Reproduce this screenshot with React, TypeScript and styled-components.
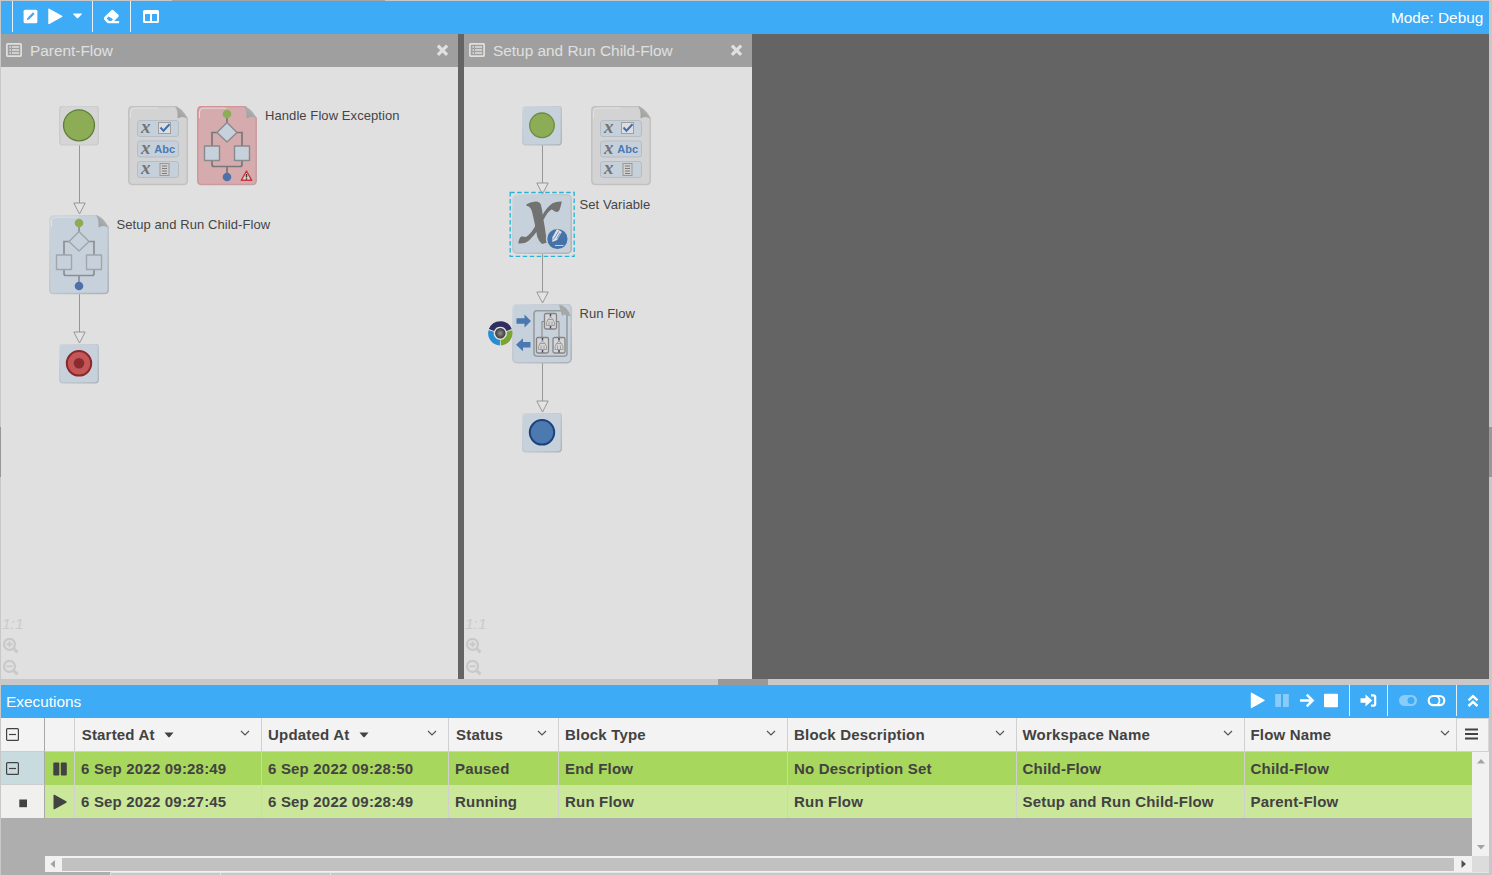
import React from 'react';
import styled, { createGlobalStyle } from 'styled-components';

const Global = createGlobalStyle`
  * { box-sizing: border-box; }
  body { margin: 0; background: #c8c8c8; font-family: 'Liberation Sans', Arial, sans-serif; color: #424242; overflow: hidden; }
  svg { display: block; flex: none; }
`;

const Page = styled.div`
  width: 1492px;
  height: 875px;
  padding: 0 3px 0 1px;
  background: #c8c8c8;
  display: flex;
  flex-direction: column;
  position: relative;
`;
const TopEdge = styled.div`
  height: 1px;
  margin-left: 171px;
  width: 213px;
  background: #a5a5a5;
`;
const EdgeGrip = styled.div<{ $side: 'left' | 'right' }>`
  position: absolute;
  top: 427px;
  height: 50px;
  width: ${p => (p.$side === 'left' ? 1 : 3)}px;
  ${p => p.$side}: 0;
  background: #989898;
`;
const Bar = styled.div`
  height: 33px;
  flex: none;
  background: #3dabf5;
  color: #fff;
  display: flex;
  align-items: center;
  font-size: 15.4px;
`;
const BarTitle = styled.span<{ $left?: number; $right?: number }>`
  margin-left: ${p => p.$left ?? 0}px;
  margin-right: ${p => p.$right ?? 0}px;
`;
const Spacer = styled.div`
  flex: 1;
`;
const Group = styled.div<{ $width: number; $first?: boolean }>`
  width: ${p => p.$width}px;
  height: 31px;
  margin-bottom: 2px;
  border-left: ${p => (p.$first ? 0 : 1)}px solid #e4f1fb;
`;

const Workspace = styled.div`
  height: 645px;
  flex: none;
  display: flex;
  gap: 6px;
  background: #646464;
`;
const Panel = styled.section<{ $width: number }>`
  width: ${p => p.$width}px;
  background: #e0e0e0;
  display: flex;
  flex-direction: column;
`;
const PanelHead = styled.header`
  height: 33px;
  background: #9f9f9f;
  color: #e0e0e0;
  display: flex;
  align-items: center;
  padding: 0 9px 1px 5px;
  font-size: 15.4px;
`;
const PanelTitle = styled.span`
  flex: 1;
  padding: 2px 0 0 8px;
`;
const Canvas = styled.div`
  flex: 1;
  position: relative;
`;
const Node = styled.div<{ $x: number; $y: number }>`
  position: absolute;
  left: ${p => p.$x}px;
  top: ${p => p.$y}px;
`;
const Label = styled(Node)`
  font-size: 13px;
  line-height: 16px;
  letter-spacing: 0.08px;
  white-space: nowrap;
  color: #454545;
`;
const ZoomTools = styled.div`
  position: absolute;
  left: 1px;
  bottom: 3px;
  display: flex;
  flex-direction: column;
  gap: 6px;
  color: #cbcbcb;
  font: italic 15.5px/16px 'Liberation Sans', sans-serif;
`;

const Splitter = styled.div`
  height: 6px;
  flex: none;
  padding-left: 717px;
`;
const Grip = styled.div`
  width: 50px;
  height: 6px;
  background: #989898;
`;

const Grid = styled.div`
  height: 154px;
  flex: none;
  background: #aeaeae;
  display: flex;
`;
const TreeColumn = styled.div`
  width: 44px;
  flex: none;
`;
const TreeCell = styled.div<{ $bg: string; $h: number; $line?: boolean; $pad: number }>`
  height: ${p => p.$h}px;
  background: ${p => p.$bg};
  border-right: 1px solid #a8a8a8;
  border-bottom: ${p => (p.$line ? 1 : 0)}px solid #cdcdcd;
  padding-left: ${p => p.$pad}px;
  display: flex;
  align-items: center;
`;
const DataArea = styled.div`
  flex: 1;
  display: flex;
  flex-direction: column;
`;
const HeaderRow = styled.div`
  display: flex;
  height: 34px;
  background: #f3f3f3;
  border-bottom: 1px solid #cfcfcf;
`;
const Cell = styled.div<{ $width: number; $pad?: number; $last?: boolean }>`
  width: ${p => p.$width}px;
  border-right: ${p => (p.$last ? 0 : 1)}px solid #d0d0d0;
  padding-left: ${p => p.$pad ?? 7}px;
  display: flex;
  align-items: center;
  font-size: 15px;
  font-weight: bold;
  letter-spacing: 0.19px;
  white-space: nowrap;
`;
const HeadCell = styled(Cell)<{ $end: number }>`
  justify-content: space-between;
  padding-right: ${p => p.$end}px;
`;
const HeadText = styled.span`
  display: flex;
  align-items: center;
  gap: 9.5px;
`;
const Raised = styled.span`
  margin-bottom: 3px;
`;
const MenuCell = styled.div`
  width: 32px;
  border: 1px solid #d8d8d8;
  border-bottom: 0;
  border-left: 0;
  padding: 0 0 2px 8px;
  display: flex;
  align-items: center;
`;
const Body = styled.div`
  display: flex;
  height: 104px;
`;
const Rows = styled.div`
  width: 1427px;
`;
const Row = styled.div<{ $bg: string }>`
  height: 33px;
  background: ${p => p.$bg};
  display: flex;
`;
const VScroll = styled.div`
  width: 17px;
  background: #f1f1f1;
  display: flex;
  flex-direction: column;
  justify-content: space-between;
  align-items: center;
  padding: 6px 0 5px;
`;
const HScroll = styled.div`
  height: 16px;
  width: 1427px;
  background: #f1f1f1;
  display: flex;
  align-items: center;
  justify-content: space-between;
  padding: 0 4px 0 5px;
`;
const Thumb = styled.div`
  width: 1392px;
  height: 13px;
  margin-top: 1px;
  margin-left: -3px;
  background: #c1c1c1;
`;
const ScrollLine = styled.div`
  display: flex;
  background: #dcdcdc;
`;
const BottomStrip = styled.div`
  height: 3px;
  display: flex;
  background: #c8c8c8;
  border-top: 1px solid #e6e6e6;
`;
const StripTab = styled.div<{ $bg: string }>`
  width: 110px;
  height: 3px;
  margin-top: -1px;
  background: ${p => p.$bg};
  border-right: 1px solid #e6e6e6;
  border-top: 1px solid ${p => (p.$bg === '#c8c8c8' ? '#e6e6e6' : p.$bg)};
`;

/* Toolbar drawings; every group is 31px tall and drawn in its own pixel space. */
const EditTools = () => (
  <svg width="79" height="31" fill="#fff">
    <rect x="10.6" y="8.7" width="13.800" height="13.600" rx="1.600" />
    <path d="M13.800 19.200l.6-2.300 5.600-5.600 1.600 1.700-5.600 5.600z" fill="#3dabf5" />
    <path d="M35.300 8.300q0-1.200 1.100-.6l12.600 7q1 .7 0 1.400l-12.600 7q-1.100.5-1.100-.6z" />
    <path d="M60.500 12.500h8q.9 0 .3.800l-3.600 3.600q-.7.600-1.400 0l-3.600-3.600q-.6-.8.3-.8z" />
  </svg>
);
const EraserIcon = () => (
  <svg width="37" height="31">
    <path fill="#fff" fillRule="evenodd" d="M11.400 16l7-6.800q1-.8 2 0l5 4.600q.8 1 0 2l-4.200 4.200h4.900v2.300H15.300q-.8 0-1.500-.7l-2.400-2.800q-.9-1.200 0-2.800zM15.600 15.600l-2 1.900 2.500 2.500h2.200l1.800-1.800z" />
  </svg>
);
const ColumnsIcon = () => (
  <svg width="40" height="31">
    <path fill="#fff" fillRule="evenodd" d="M13.500 9h13q1.500 0 1.500 1.500v10q0 1.500-1.500 1.500h-13q-1.500 0-1.500-1.500v-10Q12 9 13.500 9zM14 13v7h5v-7zM21 13v7h5v-7z" />
  </svg>
);

const ListIcon = () => (
  <svg width="16" height="14" fill="none" stroke="#e0e0e0">
    <rect x=".9" y=".8" width="14.200" height="12.400" rx="1" strokeWidth="1.700" />
    <path d="M3.500 4h1.500M6 4h7M3.500 7h1.500M6 7h7M3.500 10h1.500M6 10h7" strokeWidth="1.400" />
  </svg>
);
const CloseIcon = () => (
  <svg width="13" height="12" viewBox="0 0 13 12">
    <path d="M1.900 1.600l9.200 9.200M11.100 1.600l-9.200 9.200" stroke="#e0e0e0" strokeWidth="3.200" />
  </svg>
);
const Magnifier = ({ plus }: { plus?: boolean }) => (
  <svg width="17" height="16" fill="none" stroke="#c9c9c9">
    <circle cx="7.500" cy="6.300" r="5.500" strokeWidth="2.200" />
    <path d="M11.300 10.200l4.200 4.200" strokeWidth="3" />
    <path d={plus ? 'M4.500 6.300h6M7.500 3.300v6' : 'M4.500 6.300h6'} strokeWidth="1.900" />
  </svg>
);
const Zooms = () => (
  <ZoomTools>
    <span>1:1</span>
    <Magnifier plus />
    <Magnifier />
  </ZoomTools>
);

const HiddenDefs = styled.svg`
  position: absolute;
`;
const Defs = () => (
  <HiddenDefs width="0" height="0">
    <defs>
      <linearGradient id="fold" x1="0" y1="1" x2="1" y2="0">
        <stop offset="0" stopColor="#989898" />
        <stop offset="1" stopColor="#bdbdbd" />
      </linearGradient>
      <linearGradient id="rim" x1="0" y1="0" x2="1" y2="1">
        <stop offset="0" stopColor="#d3d8dc" />
        <stop offset=".5" stopColor="#bfc6cc" />
        <stop offset="1" stopColor="#aab1b8" />
      </linearGradient>
      <linearGradient id="rimRed" x1="0" y1="0" x2="1" y2="1">
        <stop offset="0" stopColor="#d98f92" />
        <stop offset="1" stopColor="#c2a0a2" />
      </linearGradient>
      <radialGradient id="ball">
        <stop offset="0" stopColor="#929292" />
        <stop offset="1" stopColor="#383838" />
      </radialGradient>
    </defs>
  </HiddenDefs>
);

const Tile = ({ kind }: { kind: 'begin' | 'start' | 'end' | 'stop' }) => (
  <svg width="40" height="40">
    <rect x=".7" y=".2" width="38.600" height="38.600" rx="3" fill={kind === 'begin' ? '#d5d5d5' : '#c7d1db'} stroke={kind === 'begin' ? '#cbcbcb' : 'url(#rim)'} strokeWidth="1.300" />
    {kind === 'begin' && <circle cx="20" cy="19.300" r="15.500" fill="#8cad55" stroke="#607d3b" strokeWidth="1.300" />}
    {kind === 'start' && <circle cx="20" cy="19.300" r="12.300" fill="#8cad55" stroke="#6b8d42" strokeWidth="1.300" />}
    {kind === 'end' && <circle cx="20" cy="19.300" r="12.200" fill="#4b79b0" stroke="#1c427e" strokeWidth="2" />}
    {kind === 'stop' && (
      <>
        <circle cx="20" cy="19.300" r="12.200" fill="#c45558" stroke="#8a2829" strokeWidth="2" />
        <circle cx="20" cy="19.300" r="5.300" fill="#892c2d" />
      </>
    )}
  </svg>
);

const Sheet = ({ fill, rim }: { fill: string; rim: string }) => (
  <>
    <path d="M4 .4H48L59.200 12.200V74.500Q59.200 78.600 55 78.600H5Q.8 78.600.8 74.500V5Q.8.4 5 .4z" fill={fill} stroke={rim} strokeWidth="1.500" />
    <path d="M2.500 12V6q0-3.800 4-3.800h23" stroke="#e5e5e5" strokeOpacity=".8" fill="none" />
    <path d="M47 .2Q55 2.200 59.500 12.500Q53.500 9.500 49.500 12.500Q50.300 5 47 .2z" fill="url(#fold)" />
  </>
);

const FlowSheet = ({ error }: { error?: boolean }) => (
  <svg width="60" height="80">
    <Sheet fill={error ? '#d6abad' : '#c7d1db'} rim={error ? 'url(#rimRed)' : 'url(#rim)'} />
    <path d="M30 9v8M21 26.500h-6v14M39 26.500h6v14M15 54v4.500q0 2 2 2h26q2 0 2-2v-4.500M30 60.500v8" fill="none" stroke={error ? '#777' : '#8c9094'} strokeWidth="1.700" />
    <path d="M30 16.500l10 10-10 9.500L20 26.500zM7.500 40h15v14.500h-15zM37.500 40h15v14.500h-15z" fill="#c7d1db" stroke={error ? '#878b8e' : '#a0a6ab'} strokeWidth="1.400" strokeLinejoin="round" />
    <circle cx="30" cy="8" r="4.300" fill="#8cad55" />
    <circle cx="30" cy="71" r="4.300" fill="#4e70ab" />
    {error && (
      <>
        <path d="M49.500 65l5.200 9.300H44.300z" fill="#ded5d5" stroke="#c93739" strokeWidth="1.400" strokeLinejoin="round" />
        <path d="M49.500 68v3.500M49.500 72.200v1.300" stroke="#333" strokeWidth="1.400" />
      </>
    )}
  </svg>
);

const XText = styled.text`
  font: italic bold 19px 'Liberation Serif', serif;
  fill: #747474;
`;
const AbcText = styled.text`
  font: bold 11px 'Liberation Sans', sans-serif;
  fill: #4b79b5;
`;
const VariablesSheet = () => (
  <svg width="60" height="80">
    <Sheet fill="#d3d3d3" rim="#c1c1c1" />
    {[14.500, 35, 55.500].map(y => (
      <g key={y}>
        <rect x="9.500" y={y} width="41" height="16" rx="2.500" fill="#c6d0db" stroke="#b5bdc5" />
        <XText x="13" y={y + 12.800}>x</XText>
      </g>
    ))}
    <rect x="30.500" y="16.500" width="12" height="11" fill="#dedede" stroke="#9f9f9f" />
    <path d="M32.500 21.500l3 3.300 6-6.500" fill="none" stroke="#416fad" strokeWidth="2" />
    <AbcText x="26.300" y="47.200">Abc</AbcText>
    <rect x="32" y="57.500" width="9" height="12" fill="#cfcfcf" stroke="#999" />
    <path d="M34 60h5M34 62.500h5M34 65h5M34 67.500h5" stroke="#7d7d7d" />
  </svg>
);

const SetVariableTile = () => (
  <svg width="66" height="66">
    <rect x="3.800" y="3.800" width="58.400" height="58.400" rx="4" fill="#c7d1db" stroke="url(#rim)" strokeWidth="1.500" />
    <g fill="#727272">
      <path d="M17.500 13.200Q22 10.600 27 10.500Q31 10.600 32 14Q33.300 19 33.800 25L36 37.500Q36.800 46 38.500 51.500L33 53Q30 50.500 28.300 46L26 34L23 20.500Q21.500 15.500 17.500 14.800z" />
      <path d="M33 24.500Q38.500 15.500 43.500 12.300Q47.500 10.200 52.800 10.500Q52 15 50.500 19Q48.500 22.300 45.500 20.300Q43.500 18.500 42.500 18.500Q38.500 20.500 34.500 29z" />
      <path d="M27.200 33Q23 42 17 46Q14.500 45.200 12.500 45.600Q10 46.500 9.300 52.500Q16.500 53 20.500 49Q25 44.500 29 39z" />
    </g>
    <circle cx="48.400" cy="48" r="10.800" fill="#4672aa" stroke="#c8cfd5" strokeWidth="1.400" />
    <path d="M43.300 51l.1-4.800 4-7.300q.6-.9 1.500-.5l3.200 2q.8.5.3 1.400l-4.300 7.200z" fill="#dde2e7" />
    <path d="M46.100 46.300l3.500-6M48 47.500l3.200-5.500M44.300 48.600l1.800-2.300" stroke="#4672aa" strokeWidth=".7" />
    <path d="M46 54.500h8.500" stroke="#ccd3da" />
    <rect x="1.200" y="1.500" width="64" height="64" fill="none" stroke="#29b2d6" strokeWidth="1.300" strokeDasharray="4.500 2.500" />
  </svg>
);

const MiniFlow = ({ x, y }: { x: number; y: number }) => (
  <g transform={`translate(${x} ${y})`} fill="none">
    <rect x=".5" y=".5" width="12" height="15.500" rx="1.500" fill="#d6d6d6" stroke="#858585" strokeWidth="1.300" />
    <path d="M6.500 4L9 6.500H4zM4 6.500L2.500 9.500v3h8v-3L9 6.500M5 8.500v3.500M8 8.500v3.500" strokeWidth=".9" stroke="#999" />
    <path d="M6.500 1v2.500M6.500 13v2.500" stroke="#44406a" strokeWidth="1.400" />
  </g>
);
const RunFlowTile = () => (
  <svg width="60" height="60">
    <rect x=".8" y=".3" width="58.400" height="58.400" rx="4" fill="#c7d1db" stroke="url(#rim)" strokeWidth="1.500" />
    <rect x="22" y="6.700" width="33" height="45.500" rx="3" fill="none" stroke="#979c9f" strokeWidth="1.600" />
    <path d="M47 .5Q55 1.500 59 12.500Q52 9.500 50 12L47 .5z" fill="#a5a7a9" />
    <path d="M32 17.500h-2v16M45 17.500h2v16" fill="none" stroke="#858585" />
    <MiniFlow x={32} y={9} />
    <MiniFlow x={24} y={33} />
    <MiniFlow x={40.500} y={33} />
    <path d="M4.500 14.300h8v-3.800l6.500 6.500-6.500 6.500v-3.800h-8zM18.500 38h-7.500v-3.800l-7 6.500 7 6.500v-3.800h7.500z" fill="#4a78b0" />
  </svg>
);
const BusyRing = () => (
  <svg width="26" height="26" viewBox="-13.300 -13.300 26 26" fill="none" strokeWidth="5.500">
    <path d="M-8.800-3.300A9.400 9.400 0 0 1 8.800-3.300" stroke="#302d61" />
    <path d="M9.100-2.300A9.400 9.400 0 0 1 .4 9.400" stroke="#7ba533" />
    <path d="M-.4 9.400A9.400 9.400 0 0 1-9.100-2.300" stroke="#268dd3" />
    <circle r="5.200" fill="url(#ball)" />
  </svg>
);

const Connector = ({ h }: { h: number }) => (
  <svg width="13" height={h} stroke="#969696">
    <path d={`M6.500 0v${h - 12}`} />
    <path d={`M.8 ${h - 12}h11.400l-5.700 11z`} fill="#e3e3e3" />
  </svg>
);

const TreeToggle = () => (
  <svg width="13" height="13" fill="none" stroke="#424242" strokeWidth="1.200">
    <rect x=".6" y=".6" width="11.800" height="11.800" rx="1" />
    <path d="M3 6.500h7" />
  </svg>
);
const Caret = () => (
  <svg width="10" height="6"><path d="M.5.500h9L5.500 5.300h-1z" fill="#424242" /></svg>
);
const Chevron = () => (
  <svg width="10" height="8"><path d="M1 2l4 4 4-4" fill="none" stroke="#555" strokeWidth="1.200" /></svg>
);
const PauseGlyph = () => (
  <svg width="14" height="14" fill="#424242"><rect width="6" height="13" x=".3" y=".5" rx="1" /><rect x="7.800" y=".5" width="6" height="13" rx="1" /></svg>
);
const PlayGlyph = () => (
  <svg width="14" height="16" fill="#424242"><path d="M.5 1.400Q.5.300 1.500.8l11.700 6.500q.9.700 0 1.400L1.500 15.200q-1 .5-1-.6z" /></svg>
);
const ScrollArrow = ({ d, dark }: { d: string; dark?: boolean }) => (
  <svg width="8" height="8"><path d={d} fill={dark ? '#505050' : '#a3a3a3'} /></svg>
);

const RunTools = () => (
  <svg width="99" height="31" fill="#fff">
    <path d="M.8 8.300q0-1.200 1-.6l12.500 7q1 .7 0 1.400l-12.500 7q-1 .5-1-.6z" />
    <path d="M25.200 9h5.800v13h-5.800zM33 9h5.800v13H33z" opacity=".4" />
    <path d="M50 15.500h12.500M56.800 9.700l5.800 5.800-5.800 5.800" fill="none" stroke="#fff" strokeWidth="2.500" />
    <rect x="74" y="8.800" width="14" height="13.400" rx="1" />
  </svg>
);
const StepInto = () => (
  <svg width="37" height="31" fill="#fff">
    <path d="M10.500 13.200h5V9.500l6.700 6-6.700 6v-3.700h-5z" />
    <path d="M21 10.400h2.500q1.700 0 1.700 1.700v6.800q0 1.700-1.700 1.700H21" fill="none" stroke="#fff" strokeWidth="2.200" />
  </svg>
);
const Toggles = () => (
  <svg width="68" height="31">
    <path opacity=".4" fill="#fff" fillRule="evenodd" d="M16.500 10h7a5.500 5.500 0 0 1 0 11h-7a5.500 5.500 0 0 1 0-11zm6.500 2a3.500 3.500 0 0 0 0 7a3.500 3.500 0 0 0 0-7z" />
    <rect x="40.700" y="11" width="15.600" height="9.200" rx="4.600" fill="none" stroke="#fff" strokeWidth="2.200" />
    <path d="M48.500 11q3 1.500 3 4.600t-3 4.600" fill="none" stroke="#fff" strokeWidth="1.600" />
  </svg>
);
const CollapseIcon = () => (
  <svg width="32" height="31"><path d="M11.500 15.300l4.500-4.100 4.500 4.100M11.500 21l4.500-4.100 4.500 4.100" fill="none" stroke="#fff" strokeWidth="2.500" /></svg>
);

const columns = [
  { title: 'Started At', width: 187, pad: 6.7, sorted: true },
  { title: 'Updated At', width: 187, pad: 6, sorted: true },
  { title: 'Status', width: 110, pad: 7 },
  { title: 'Block Type', width: 229, pad: 6 },
  { title: 'Block Description', width: 229, pad: 6 },
  { title: 'Workspace Name', width: 228, pad: 5.5 },
  { title: 'Flow Name', width: 212, pad: 5.5 },
];
const executions = [
  { bg: '#a8d75d', paused: true, values: ['6 Sep 2022 09:28:49', '6 Sep 2022 09:28:50', 'Paused', 'End Flow', 'No Description Set', 'Child-Flow', 'Child-Flow'] },
  { bg: '#cae79a', paused: false, values: ['6 Sep 2022 09:27:45', '6 Sep 2022 09:28:49', 'Running', 'Run Flow', 'Run Flow', 'Setup and Run Child-Flow', 'Parent-Flow'] },
];

export default function App() {
  return (
    <Page>
      <Global />
      <Defs />
      <TopEdge />
      <Bar>
        <Group $width={11} $first />
        <Group $width={80}><EditTools /></Group>
        <Group $width={38}><EraserIcon /></Group>
        <Group $width={41}><ColumnsIcon /></Group>
        <Spacer />
        <BarTitle $right={5.7}>Mode: Debug</BarTitle>
      </Bar>
      <Workspace>
        <Panel $width={457}>
          <PanelHead>
            <ListIcon />
            <PanelTitle>Parent-Flow</PanelTitle>
            <CloseIcon />
          </PanelHead>
          <Canvas>
            <Node $x={72} $y={78}><Connector h={70} /></Node>
            <Node $x={72} $y={227}><Connector h={50} /></Node>
            <Node $x={58} $y={39}><Tile kind="begin" /></Node>
            <Node $x={127} $y={39}><VariablesSheet /></Node>
            <Node $x={196} $y={39}><FlowSheet error /></Node>
            <Label $x={264} $y={41}>Handle Flow Exception</Label>
            <Node $x={48} $y={148}><FlowSheet /></Node>
            <Label $x={115.5} $y={150}>Setup and Run Child-Flow</Label>
            <Node $x={58} $y={277}><Tile kind="stop" /></Node>
            <Zooms />
          </Canvas>
        </Panel>
        <Panel $width={288}>
          <PanelHead>
            <ListIcon />
            <PanelTitle>Setup and Run Child-Flow</PanelTitle>
            <CloseIcon />
          </PanelHead>
          <Canvas>
            <Node $x={72} $y={78}><Connector h={50} /></Node>
            <Node $x={72} $y={187}><Connector h={50} /></Node>
            <Node $x={72} $y={296}><Connector h={50} /></Node>
            <Node $x={58} $y={39}><Tile kind="start" /></Node>
            <Node $x={127} $y={39}><VariablesSheet /></Node>
            <Node $x={45} $y={124}><SetVariableTile /></Node>
            <Label $x={115.5} $y={130}>Set Variable</Label>
            <Node $x={48} $y={237}><RunFlowTile /></Node>
            <Label $x={115.5} $y={239}>Run Flow</Label>
            <Node $x={23} $y={253}><BusyRing /></Node>
            <Node $x={58} $y={346}><Tile kind="end" /></Node>
            <Zooms />
          </Canvas>
        </Panel>
      </Workspace>
      <Splitter><Grip /></Splitter>
      <Bar>
        <BarTitle $left={5}>Executions</BarTitle>
        <Spacer />
        <Group $width={99} $first><RunTools /></Group>
        <Group $width={38}><StepInto /></Group>
        <Group $width={69}><Toggles /></Group>
        <Group $width={33}><CollapseIcon /></Group>
      </Bar>
      <Grid>
        <TreeColumn>
          <TreeCell $bg="#f3f3f3" $h={34} $line $pad={5}><TreeToggle /></TreeCell>
          <TreeCell $bg="#c8dce0" $h={33} $line $pad={5}><TreeToggle /></TreeCell>
          <TreeCell $bg="#f0f0ee" $h={33} $pad={18}>
            <svg width="9" height="13"><rect x=".3" y="4.500" width="7.700" height="7.700" fill="#424242" /></svg>
          </TreeCell>
        </TreeColumn>
        <DataArea>
          <HeaderRow>
            <Cell $width={30} />
            {columns.map((c, i) => (
              <HeadCell key={c.title} $width={c.width} $pad={c.pad} $end={i === 6 ? 6 : 11}>
                <HeadText>{c.title}{c.sorted && <Caret />}</HeadText>
                <Raised><Chevron /></Raised>
              </HeadCell>
            ))}
            <MenuCell>
              <svg width="14" height="12"><path d="M0 1.500h13M0 6h13M0 10.500h13" stroke="#424242" strokeWidth="2" /></svg>
            </MenuCell>
          </HeaderRow>
          <Body>
            <Rows>
              {executions.map(e => (
                <Row key={e.bg} $bg={e.bg}>
                  <Cell $width={30} $pad={8}>{e.paused ? <PauseGlyph /> : <PlayGlyph />}</Cell>
                  {e.values.map((v, i) => (
                    <Cell key={i} $width={i === 6 ? 227 : columns[i].width} $pad={i < 5 ? 6 : 5.5} $last={i === 6}>{v}</Cell>
                  ))}
                </Row>
              ))}
            </Rows>
            <VScroll>
              <ScrollArrow d="M0 5.500L4 1l4 4.500z" />
              <ScrollArrow d="M0 2l4 4.500L8 2z" />
            </VScroll>
          </Body>
          <ScrollLine>
            <HScroll>
              <ScrollArrow d="M5 0v8L.5 4z" />
              <Thumb />
              <ScrollArrow dark d="M1.500 0v8l4.500-4z" />
            </HScroll>
          </ScrollLine>
        </DataArea>
      </Grid>
      <BottomStrip>
        <StripTab $bg="#aeaeae" />
        <StripTab $bg="#c8c8c8" />
        <StripTab $bg="#c8c8c8" />
      </BottomStrip>
      <EdgeGrip $side="left" />
      <EdgeGrip $side="right" />
    </Page>
  );
}
